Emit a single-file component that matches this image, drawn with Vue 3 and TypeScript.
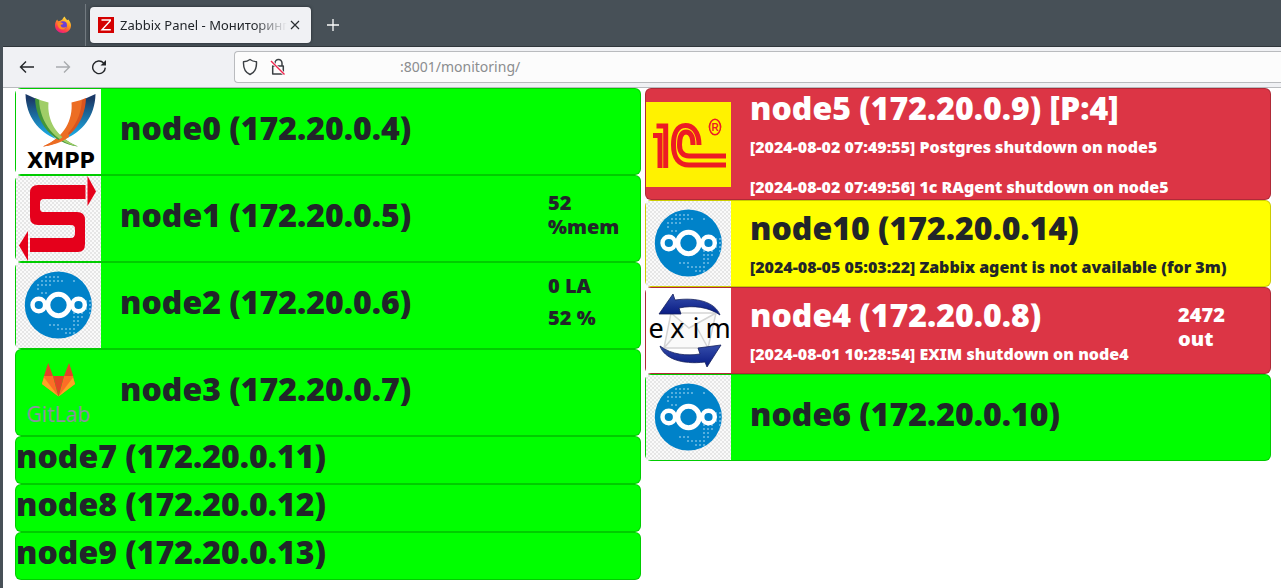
<script setup lang="ts">
import { ref } from 'vue'

type Status = 'ok' | 'warn' | 'alert'
type Logo = 'xmpp' | 'switch' | 'cloud' | 'gitlab' | 'onec' | 'exim'

interface HostNode {
  title: string
  status: Status
  logo?: Logo
  events?: string[]
  metrics?: string[]
}

const address = ref(':8001/monitoring/')

const columns: HostNode[][] = [
  [
    { title: 'node0 (172.20.0.4)', status: 'ok', logo: 'xmpp' },
    { title: 'node1 (172.20.0.5)', status: 'ok', logo: 'switch', metrics: ['52 %mem'] },
    { title: 'node2 (172.20.0.6)', status: 'ok', logo: 'cloud', metrics: ['0 LA', '52 %'] },
    { title: 'node3 (172.20.0.7)', status: 'ok', logo: 'gitlab' },
    { title: 'node7 (172.20.0.11)', status: 'ok' },
    { title: 'node8 (172.20.0.12)', status: 'ok' },
    { title: 'node9 (172.20.0.13)', status: 'ok' },
  ],
  [
    {
      title: 'node5 (172.20.0.9) [P:4]',
      status: 'alert',
      logo: 'onec',
      events: [
        '[2024-08-02 07:49:55] Postgres shutdown on node5',
        '[2024-08-02 07:49:56] 1c RAgent shutdown on node5',
      ],
    },
    {
      title: 'node10 (172.20.0.14)',
      status: 'warn',
      logo: 'cloud',
      events: ['[2024-08-05 05:03:22] Zabbix agent is not available (for 3m)'],
    },
    {
      title: 'node4 (172.20.0.8)',
      status: 'alert',
      logo: 'exim',
      events: ['[2024-08-01 10:28:54] EXIM shutdown on node4'],
      metrics: ['2472 out'],
    },
    { title: 'node6 (172.20.0.10)', status: 'ok', logo: 'cloud' },
  ],
]
</script>

<template>
  <div class="window">
    <header class="tabbar">
      <button class="pinned" type="button" aria-label="Firefox">
        <svg width="18" height="18" viewBox="0 0 18 18" aria-hidden="true">
          <defs>
            <linearGradient id="flame" x1="0.8" y1="0" x2="0.25" y2="1">
              <stop offset="0" stop-color="#fff04a" />
              <stop offset="0.4" stop-color="#ff9a1f" />
              <stop offset="0.75" stop-color="#ff3c4c" />
              <stop offset="1" stop-color="#e3188f" />
            </linearGradient>
          </defs>
          <path d="M9 17C4.500 17 1 13.700 1 9.500C1 7 1.800 5 3.200 3.400L4 5.200L6.300 4.800L8.300 3.500C9 2 10 1.200 10.800 .6C11.200 2.600 12.500 3.200 13.300 4.300L14.300 3.500C16 5.400 17 7.400 17 9.500C17 13.700 13.500 17 9 17Z" fill="url(#flame)" />
          <circle cx="9" cy="9.300" r="4" fill="#6b3fd6" />
          <path d="M3.500 7C5.500 5.500 8 6.200 9.500 7.800C8.500 8.500 7.500 8.500 6.500 9C7 11.500 9.500 12.500 12.500 10.700C11.500 13.500 8 14.500 5.500 12.500C4 11 3.300 9 3.500 7Z" fill="#ff8a22" />
        </svg>
      </button>
      <div class="tab">
        <span class="favicon">
          <svg width="16" height="16" viewBox="0 0 16 16" aria-hidden="true">
            <path d="M3.500 3H12.300V3.700L4 12.700H12.800" fill="none" stroke="#fff" stroke-width="1.400" />
          </svg>
        </span>
        <span class="tab-title">Zabbix Panel - Мониторинг</span>
        <button class="close" type="button" aria-label="Close tab">
          <svg width="10" height="10" viewBox="0 0 10 10" aria-hidden="true">
            <path d="M1 1L9 9M9 1L1 9" stroke="#2a2e32" stroke-width="1.200" />
          </svg>
        </button>
      </div>
      <button class="new-tab" type="button" aria-label="New tab">
        <svg width="14" height="14" viewBox="0 0 14 14" aria-hidden="true">
          <path d="M7 1V13M1 7H13" stroke="#fcfcfc" stroke-width="1.300" />
        </svg>
      </button>
    </header>

    <nav class="toolbar">
      <button class="tool" type="button" aria-label="Back">
        <svg width="16" height="16" viewBox="0 0 16 16" aria-hidden="true">
          <path d="M15 8H2M7 2.500L1.500 8L7 13.500" fill="none" stroke="#232629" stroke-width="1.400" />
        </svg>
      </button>
      <button class="tool" type="button" aria-label="Forward" disabled>
        <svg width="16" height="16" viewBox="0 0 16 16" aria-hidden="true">
          <path d="M1 8H14M9 2.500L14.500 8L9 13.500" fill="none" stroke="#a8abae" stroke-width="1.400" />
        </svg>
      </button>
      <button class="tool" type="button" aria-label="Reload">
        <svg width="16" height="16" viewBox="0 0 16 16" aria-hidden="true">
          <path d="M12.600 4A6.300 6.300 0 1 0 14.300 8.600" fill="none" stroke="#232629" stroke-width="1.400" />
          <path d="M15 1V6.500H9.500Z" fill="#232629" />
        </svg>
      </button>
      <div class="urlbar">
        <svg width="16" height="18" viewBox="0 0 16 18" aria-hidden="true">
          <path d="M8 1.500C6 3 3.500 3.600 1.500 3.700C1.200 9.500 3.200 14.500 8 16.500C12.800 14.500 14.800 9.500 14.500 3.700C12.500 3.600 10 3 8 1.500Z" fill="none" stroke="#3b3f43" stroke-width="1.400" stroke-linejoin="round" />
        </svg>
        <svg width="16" height="18" viewBox="0 0 16 18" aria-hidden="true">
          <path d="M5 8V5A3.500 3.500 0 0 1 12 5V8M2.700 8H13.300V16H2.700Z" fill="none" stroke="#3b3f43" stroke-width="1.500" stroke-linejoin="round" />
          <path d="M1 3L14.500 16.500" stroke="#fff" stroke-width="3" />
          <path d="M1 3L14.500 16.500" stroke="#f0264f" stroke-width="1.400" />
        </svg>
        <input v-model="address" class="address" type="text" aria-label="Address" />
      </div>
    </nav>

    <main class="panel">
      <section v-for="(column, c) in columns" :key="c" class="column">
        <article
          v-for="node in column"
          :key="node.title"
          class="card"
          :class="[node.status, { plain: !node.logo }]"
        >
          <svg v-if="node.logo" class="logo" :class="node.logo" viewBox="0 0 85 85" role="img" :aria-label="node.logo">
            <g v-if="node.logo === 'xmpp'">
              <defs>
                <linearGradient id="wing" x1="0" y1="0" x2="0" y2="1">
                  <stop offset="0.100" stop-color="#1b3967" />
                  <stop offset="0.900" stop-color="#1ca6df" />
                </linearGradient>
              </defs>
              <path d="M9.500 5C10 28 23 43 40 50C28 38 21 25 20.500 10Z" fill="url(#wing)" />
              <path d="M79.500 5C79 28 66 43 49 50C61 38 68 25 68.500 10Z" fill="url(#wing)" />
              <path d="M70 9L65 11C61 32 47 49 27 57.500C52 54 69 35 70 9Z" fill="#d9541e" />
              <path d="M66 10.700L55.500 13.500C57 30 49 48 27 57.500C50 53 65 34 66 10.700Z" fill="#ec6d23" />
              <path d="M19 9L24 11C28 32 42 49 62 57.500C37 54 20 35 19 9Z" fill="#439639" />
              <path d="M23 10.700L32.500 13.500C31 30 39 48 62 57.500C39 53 24 34 23 10.700Z" fill="#a0ce67" />
              <path d="M52 43C47 49 39 54 27 57.500C37 56.500 46 53 53 48Z" fill="#ec6d23" />
              <text x="45" y="79" text-anchor="middle" class="xmpp-word">XMPP</text>
            </g>

            <g v-else-if="node.logo === 'switch'" fill="#e5001b">
              <path d="M69.500 9H22Q14 9 14 17V41Q14 49 22 49H55Q59 49 59 53V57Q59 62 55 62H14V76H62Q69 76 69 68V44Q69 36 61 36H27Q24 36 24 32V27Q24 23 28 23H69.500Z" />
              <path d="M71.500 0V30L80 15.500Z" />
              <path d="M12 55V85L3 69.500Z" />
            </g>

            <g v-else-if="node.logo === 'cloud'">
              <defs>
                <pattern id="dots" width="4" height="4" patternUnits="userSpaceOnUse">
                  <rect x="1" y="1" width="2" height="2" fill="#55aede" />
                </pattern>
              </defs>
              <circle cx="42.300" cy="42" r="33.500" fill="#0082c9" />
              <path d="M28 12H44V16H48V20H36V24H24V28H20V20H24V16H28ZM56 16H60V20H56ZM24 28H32V32H24ZM68 36H76V52H72V48H68ZM56 48H68V56H64V64H60V72H48V68H40V64H32V60H44V64H56Z" fill="url(#dots)" />
              <g fill="#0082c9" stroke="#fff">
                <circle cx="22.800" cy="42" r="6.300" stroke-width="4.400" />
                <circle cx="62.500" cy="42" r="6.300" stroke-width="4.400" />
                <circle cx="42.500" cy="42" r="10.700" stroke-width="5" />
              </g>
            </g>

            <g v-else-if="node.logo === 'gitlab'">
              <path d="M42.500 46.500L26 34L28 26H37Z" fill="#fc6d26" />
              <path d="M42.500 46.500L59 34L57 26H48Z" fill="#fc6d26" />
              <path d="M42.500 46.500L26 34L28 27.500Z" fill="#fca326" />
              <path d="M42.500 46.500L59 34L57 27.500Z" fill="#fca326" />
              <path d="M37 26H48L42.500 46.500ZM28 26L32.200 13L37 26ZM48 26L53 13L57.300 26Z" fill="#e24329" />
              <text x="42.500" y="72" text-anchor="middle" class="gitlab-word">GitLab</text>
            </g>

            <g v-else-if="node.logo === 'onec'">
              <rect width="85" height="85" fill="#fff200" />
              <g fill="none" stroke="#ed1c24" stroke-width="5">
                <path d="M7 33.500H14V66" />
                <path d="M10.500 24H19.700V66" />
                <path d="M53 43C53 29 46 23.500 39.500 23.500C31 23.500 27.500 32 27.500 43C27.500 56 33 63 43 63H80" />
                <path d="M47 43C47 34 44 30 40 30C35 30 33.500 36 33.500 43C33.500 50 37 54 43 54H80" />
              </g>
              <circle cx="69" cy="25" r="5.500" fill="none" stroke="#ed1c24" stroke-width="1.500" />
              <ellipse cx="69" cy="25" rx="5.500" ry="7.800" fill="#fff200" stroke="#ed1c24" stroke-width="1.500" />
              <text x="69" y="28.500" text-anchor="middle" class="registered">R</text>
            </g>

            <g v-else>
              <defs>
                <linearGradient id="sweep" x1="0" y1="0" x2="0" y2="1">
                  <stop offset="0" stop-color="#354dab" />
                  <stop offset="1" stop-color="#071a82" />
                </linearGradient>
              </defs>
              <path d="M25 25H70L62 60H18ZM25 25L43 40L70 25M18 60L37 38M62 60L50 38" fill="#fafafa" stroke="#d5d5d5" stroke-width="1.500" />
              <g fill="url(#sweep)" stroke="#14205c" stroke-width="0.800">
                <path d="M13 26L27 6L29 12C51 9 69 14 74 27C63 19 47 17 33 20L35 26Z" />
                <path d="M75 57L61 79L59 74C35 77 18 70 14 58C26 67 41 68 54 66L52 60Z" />
              </g>
              <g class="exim-word" text-anchor="middle">
                <text x="10" y="50">e</text>
                <text x="31.500" y="50">x</text>
                <text x="50" y="50">i</text>
                <text x="72" y="50">m</text>
              </g>
            </g>
          </svg>

          <div class="info">
            <h2>{{ node.title }}</h2>
            <p v-for="event in node.events" :key="event">{{ event }}</p>
          </div>
          <div v-if="node.metrics" class="metrics">
            <h5 v-for="metric in node.metrics" :key="metric">{{ metric }}</h5>
          </div>
        </article>
      </section>
    </main>
  </div>
</template>

<style>
body {
  margin: 0;
  background: #fff;
}
</style>

<style scoped>
* {
  box-sizing: border-box;
}

.window {
  min-height: 100vh;
  border-left: 3px solid #475057;
  background: #fff;
  font-family: 'Noto Sans', 'Open Sans', sans-serif;
  color: #212529;
}

button {
  display: flex;
  align-items: center;
  justify-content: center;
  padding: 0;
  border: 0;
  background: none;
}

.tabbar {
  display: flex;
  height: 47px;
  padding-top: 4px;
  background: #475057;
  border-bottom: 1px solid #30363b;
}

.pinned {
  width: 83px;
  padding: 0 0 0 37px;
  border-right: 1px solid #727a80;
}

.tab {
  display: flex;
  align-items: center;
  width: 221px;
  height: 36px;
  margin: 3px 0 0 4px;
  padding: 0 8px;
  border-radius: 4px;
  background: #f0f1f4;
  box-shadow: 0 0 3px #20262b;
}

.favicon {
  display: flex;
  background: #d40000;
}

.tab-title {
  flex: 1;
  min-width: 0;
  margin-left: 6px;
  overflow: hidden;
  white-space: nowrap;
  font-size: 13px;
  line-height: 20px;
  mask-image: linear-gradient(to right, #000 80%, transparent);
}

.close {
  width: 16px;
  height: 16px;
}

.new-tab {
  width: 44px;
}

.toolbar {
  display: flex;
  align-items: center;
  gap: 20px;
  height: 41px;
  padding-left: 16px;
  background: #f0f1f4;
  border-bottom: 1px solid #b9bbbe;
}

.tool {
  width: 16px;
  height: 16px;
}

.urlbar {
  display: flex;
  flex: 1;
  align-items: center;
  gap: 12px;
  height: 32px;
  margin-left: 107px;
  padding-left: 7px;
  border: 1px solid #b9bbbe;
  border-right: 0;
  border-radius: 4px 0 0 4px;
  background: #fcfcfc;
}

.address {
  flex: 1;
  min-width: 0;
  padding: 0 0 0 102px;
  border: 0;
  outline: 0;
  background: none;
  font-family: inherit;
  font-size: 14px;
  line-height: 20px;
  color: #8b8d8f;
}

.panel {
  display: grid;
  grid-template-columns: 1fr 1fr;
  gap: 4px;
  padding: 0 10px 7px 12px;
}

.card {
  display: flex;
  align-items: center;
  border: 1px solid rgba(0, 0, 0, 0.2);
  border-radius: 6px;
}

.ok {
  background: #0f0;
}

.warn {
  background: #ff0;
}

.alert {
  background: #dc3545;
  color: #fff;
}

.logo {
  flex: none;
  width: 85px;
  height: 85px;
}

.xmpp,
.exim {
  background: #fff;
}

.switch,
.cloud {
  background: repeating-conic-gradient(#e6e6e6 0 25%, #fafafa 0 50%) 0 0 / 4px 4px;
}

.info {
  flex: 1;
  min-width: 0;
  padding-left: 19px;
}

.plain .info {
  padding-left: 0;
}

h2 {
  margin: 0 0 8px;
  font-size: 32px;
  font-weight: 900;
  line-height: 38px;
}

p {
  margin: 0 0 16px;
  font-size: 16px;
  font-weight: 900;
  line-height: 24px;
}

p:last-child {
  margin-bottom: 0;
}

.metrics {
  flex: none;
  width: 92px;
  padding-right: 16px;
}

h5 {
  margin: 0 0 8px;
  font-size: 20px;
  font-weight: 900;
  line-height: 24px;
}

.xmpp-word {
  font: bold 21px 'DejaVu Sans', sans-serif;
  fill: #000;
}

.gitlab-word {
  font: 21px 'Noto Sans', sans-serif;
  fill: #8c929d;
}

.registered {
  font: bold 10px 'Liberation Sans', sans-serif;
  fill: #ed1c24;
}

.exim-word {
  font: 27px 'Noto Sans', sans-serif;
  fill: #000;
}
</style>
